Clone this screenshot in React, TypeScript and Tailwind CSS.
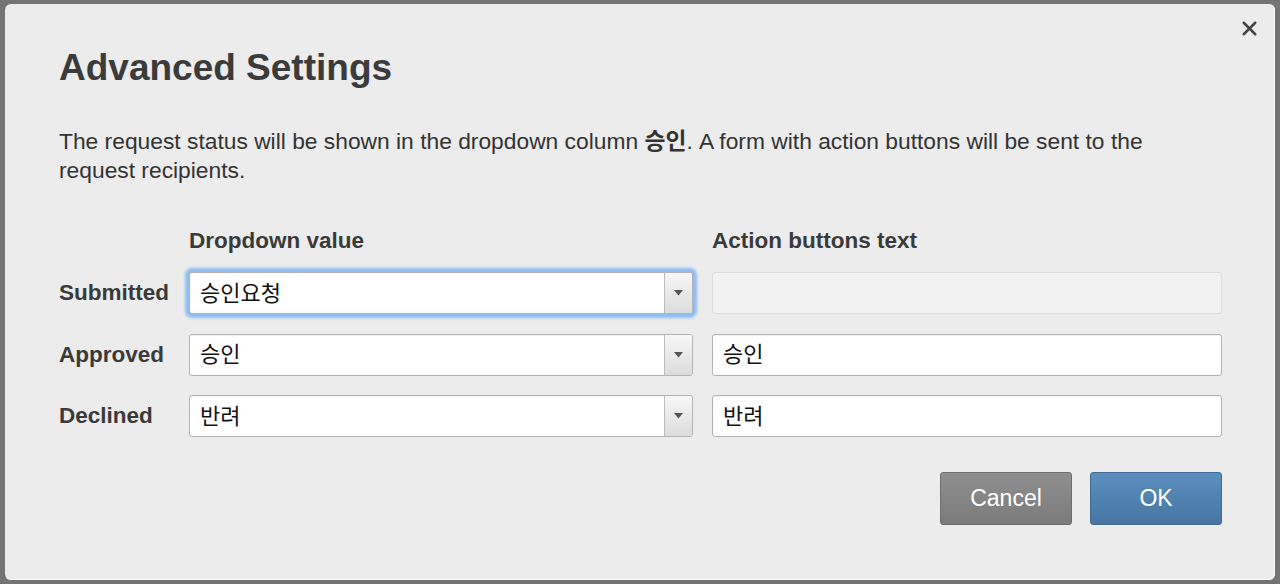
import { X } from "lucide-react";

const rows = [
  { label: "Submitted", value: "승인요청", action: "", focused: true },
  { label: "Approved", value: "승인", action: "승인", focused: false },
  { label: "Declined", value: "반려", action: "반려", focused: false },
];

const sans = "font-['Liberation_Sans','Noto_Sans_CJK_KR',sans-serif]";
const cols = "grid grid-cols-[111px_504px_510px] gap-x-[19px]";

const SelectBox = ({ value, focused }: { value: string; focused: boolean }) => (
  <div
    className={
      "flex h-[42px] items-stretch overflow-hidden rounded-[3px] border border-[#b3b3b3] bg-white " +
      (focused ? "shadow-[0_0_3px_4px_#8dbdf3]" : "shadow-[inset_0_1px_1px_rgba(0,0,0,0.06)]")
    }
  >
    <div className="flex flex-1 items-center pl-[10px] text-[22px] text-[#111]">{value}</div>
    <div className="flex w-[28px] items-center justify-center border-l border-[#bcbcbc] bg-gradient-to-b from-[#f7f7f7] to-[#dcdcdc]">
      <svg width="9" height="6" viewBox="0 0 9 6">
        <path d="M0 0 L9 0 L4.5 5.5 Z" fill="#555" />
      </svg>
    </div>
  </div>
);

const TextBox = ({ value, disabled }: { value: string; disabled: boolean }) =>
  disabled ? (
    <div className="h-[42px] rounded-[3px] border border-[#dcdcdc] bg-[#f2f2f2]" />
  ) : (
    <div className="flex h-[42px] items-center rounded-[3px] border border-[#b3b3b3] bg-white pl-[10px] text-[22px] text-[#111] shadow-[inset_0_1px_1px_rgba(0,0,0,0.06)]">
      {value}
    </div>
  );

export default function App() {
  return (
    <div className={"h-[584px] w-[1280px] overflow-hidden bg-[#747474] pt-[4px] pl-[5px] " + sans}>
      {/* dialog */}
      <div className="relative h-[576px] w-[1270px] rounded-[6px] bg-[#ececec] pt-[44px] pl-[54px] pr-[53px] shadow-[inset_-1px_-1px_0_#fafafa]">
        <button className="absolute right-[14px] top-[13px] text-[#444]">
          <X size={23} strokeWidth={2.6} />
        </button>

        <h1 className="text-[37px] font-bold leading-[40px] text-[#3b3b3b]">Advanced Settings</h1>

        <p className="mt-[39px] max-w-[1120px] text-[22.8px] leading-[29px] text-[#333]">
          The request status will be shown in the dropdown column <b>승인</b>. A form with action buttons will be sent to the
          request recipients.
        </p>

        <div className={"mt-[43px] mb-[18px] text-[22.5px] font-bold leading-[26px] text-[#3a3a3a] " + cols}>
          <div />
          <div>Dropdown value</div>
          <div>Action buttons text</div>
        </div>

        <div className={"gap-y-[19.5px] text-[#3a3a3a] " + cols}>
          {rows.map((row) => (
            <div key={row.label} className="contents">
              <div className="flex items-center text-[22.5px] font-bold">{row.label}</div>
              <SelectBox value={row.value} focused={row.focused} />
              <TextBox value={row.action} disabled={row.action === ""} />
            </div>
          ))}
        </div>

        <div className="mt-[35px] flex justify-end gap-[18px]">
          <button className="h-[53px] w-[132px] rounded-[3px] border border-[#6e6e6e] bg-gradient-to-b from-[#8f8f8f] to-[#7b7b7b] text-[23px] text-white">
            Cancel
          </button>
          <button className="h-[53px] w-[132px] rounded-[3px] border border-[#3f6b93] bg-gradient-to-b from-[#5b8fbe] to-[#4776a1] text-[23px] text-white">
            OK
          </button>
        </div>
      </div>
      <div className="mt-[1px] pl-[125px] text-[20px] font-bold text-[#111]">Send approval status in column</div>
    </div>
  );
}
